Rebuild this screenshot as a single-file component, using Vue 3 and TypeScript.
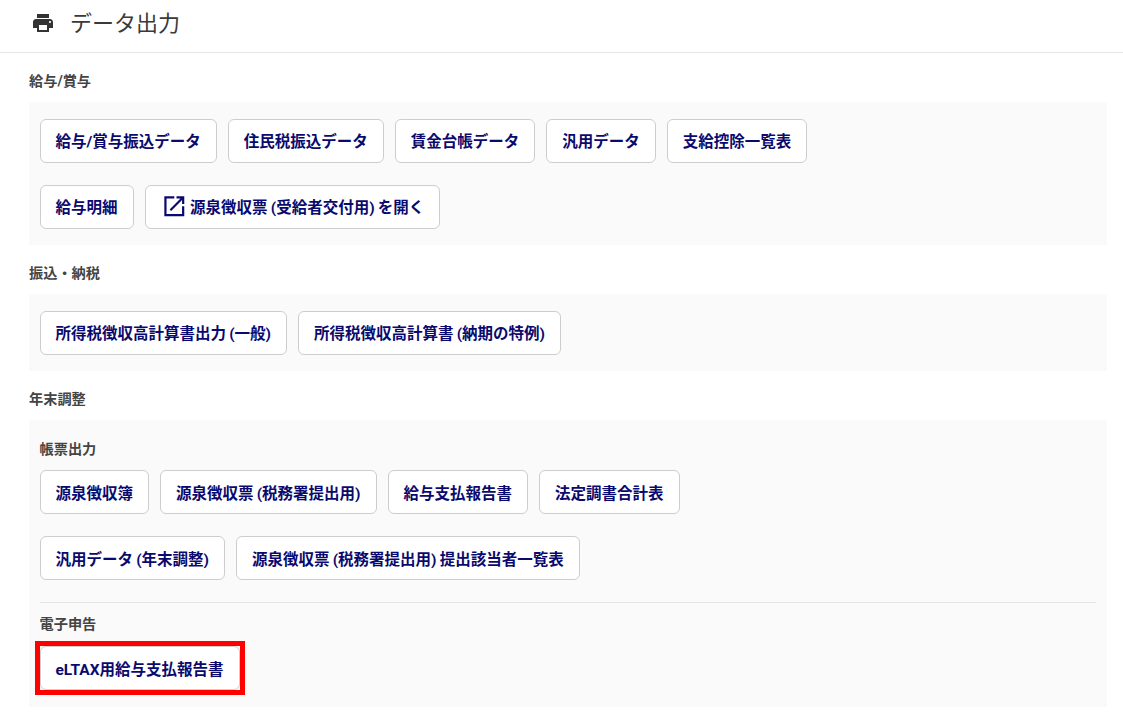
<script setup lang="ts">
const row1 = ['給与/賞与振込データ', '住民税振込データ', '賃金台帳データ', '汎用データ', '支給控除一覧表']
const row3 = ['所得税徴収高計算書出力 (一般)', '所得税徴収高計算書 (納期の特例)']
const row4 = ['源泉徴収簿', '源泉徴収票 (税務署提出用)', '給与支払報告書', '法定調書合計表']
const row5 = ['汎用データ (年末調整)', '源泉徴収票 (税務署提出用) 提出該当者一覧表']
</script>

<template>
  <div class="page">
    <header class="head">
      <svg class="printer" viewBox="0 0 24 24" width="24" height="24"><path fill="#333" d="M19 8H5c-1.66 0-3 1.34-3 3v6h4v4h12v-4h4v-6c0-1.66-1.34-3-3-3zm-3 11H8v-5h8v5zm3-7c-.55 0-1-.45-1-1s.45-1 1-1 1 .45 1 1-.45 1-1 1zm-1-9H6v4h12V3z"/></svg>
      <h1>データ出力</h1>
    </header>
    <main class="content">
      <h2>給与/賞与</h2>
      <section class="panel">
        <div class="rows">
          <div class="row">
            <button v-for="b in row1" :key="b">{{ b }}</button>
          </div>
          <div class="row">
            <button>給与明細</button>
            <button class="icon-btn">
              <svg viewBox="0 0 24 24" width="26.6" height="26.6"><path fill="#0a0a6e" d="M19 19H5V5h7V3H3v18h18v-9h-2v7zM14 3v2h3.59l-9.83 9.83 1.41 1.41L19 6.41V10h2V3h-7z"/></svg>
              源泉徴収票 (受給者交付用) を開く
            </button>
          </div>
        </div>
      </section>
      <h2>振込・納税</h2>
      <section class="panel">
        <div class="row">
          <button v-for="b in row3" :key="b">{{ b }}</button>
        </div>
      </section>
      <h2>年末調整</h2>
      <section class="panel last">
        <h3>帳票出力</h3>
        <div class="rows">
          <div class="row">
            <button v-for="b in row4" :key="b">{{ b }}</button>
          </div>
          <div class="row">
            <button v-for="b in row5" :key="b">{{ b }}</button>
          </div>
        </div>
        <hr />
        <h3 class="tight">電子申告</h3>
        <div class="row">
          <span class="mark"><button>eLTAX用給与支払報告書</button></span>
        </div>
      </section>
    </main>
  </div>
</template>

<style scoped>
.page {
  width: 1123px;
  height: 720px;
  overflow: hidden;
  background: #fff;
  font-family: Roboto, "Noto Sans CJK JP", sans-serif;
  color: #333;
}
.head {
  height: 53px;
  box-sizing: border-box;
  border-bottom: 1px solid #e6e6e6;
  display: flex;
  align-items: center;
  padding: 0 0 6px 31px;
  gap: 15px;
}
h1 {
  margin: 2px 0 0;
  font-size: 22px;
  line-height: 32px;
  font-weight: 400;
  color: #3a3a3a;
}
.content {
  padding: 0 16px 0 29px;
}
h2 {
  margin: 0;
  font-size: 14.2px;
  font-weight: 700;
  line-height: 20px;
  padding: 18px 0 11px;
  color: #444;
}
.panel {
  background: #fafafa;
  padding: 16.5px 11px 16.5px 10.5px;
}
.panel.last {
  padding: 19px 11px 17px 10.5px;
}
h3 {
  margin: 0 0 11px;
  font-size: 14.2px;
  font-weight: 700;
  line-height: 20px;
  color: #444;
}
h3.tight {
  margin-bottom: 12px;
}
.rows {
  display: flex;
  flex-direction: column;
  gap: 22px;
}
.row {
  display: flex;
  gap: 11px;
}
button {
  height: 44px;
  box-sizing: border-box;
  padding: 0 15px 1px;
  background: #fff;
  border: 1px solid #cdcdcd;
  border-radius: 6px;
  font: inherit;
  font-size: 15.5px;
  font-weight: 700;
  color: #0a0a6e;
  white-space: nowrap;
  word-spacing: -0.7px;
  display: inline-flex;
  align-items: center;
}
.icon-btn {
  gap: 3px;
}
hr {
  border: 0;
  border-top: 1px solid #e4e4e4;
  margin: 22px 0 11px;
}
.mark {
  position: relative;
  display: inline-flex;
}
.mark::after {
  content: "";
  position: absolute;
  inset: -5px;
  border: 5px solid #ff0000;
  pointer-events: none;
}
</style>
